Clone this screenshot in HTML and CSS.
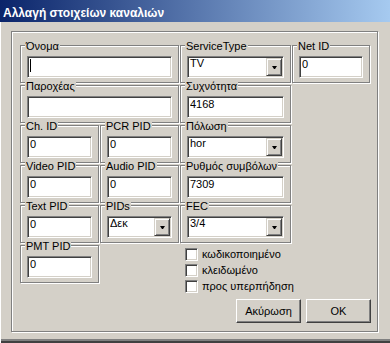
FILE: index.html
```html
<!DOCTYPE html>
<html lang="el">
<head>
<meta charset="utf-8">
<title>Αλλαγή στοιχείων καναλιών</title>
<link rel="stylesheet" href="styles.css">
</head>
<body>
<div class="window">
  <div class="titlebar"><span class="title">Αλλαγή στοιχείων καναλιών</span></div>
  <div class="panel">
    <div class="grid">
      <div class="group wide"><span class="lbl">Όνομα</span><span class="caretwrap"><input class="edit" type="text" value=""></span></div>
      <div class="group c3"><span class="lbl">ServiceType</span><div class="combo"><span class="val">TV</span><span class="dd"><svg width="5" height="3" viewBox="0 0 5 3"><polygon points="0,0 5,0 3,3 2,3" fill="#000"/></svg></span></div></div>
      <div class="group c4"><span class="lbl">Net ID</span><input class="edit" type="text" value="0"></div>

      <div class="group wide"><span class="lbl">Παροχέας</span><input class="edit" type="text" value=""></div>
      <div class="group c3"><span class="lbl">Συχνότητα</span><input class="edit" type="text" value="4168"></div>

      <div class="group c1"><span class="lbl">Ch. ID</span><input class="edit" type="text" value="0"></div>
      <div class="group c2"><span class="lbl">PCR PID</span><input class="edit" type="text" value="0"></div>
      <div class="group c3"><span class="lbl">Πόλωση</span><div class="combo"><span class="val">hor</span><span class="dd"><svg width="5" height="3" viewBox="0 0 5 3"><polygon points="0,0 5,0 3,3 2,3" fill="#000"/></svg></span></div></div>

      <div class="group c1"><span class="lbl">Video PID</span><input class="edit" type="text" value="0"></div>
      <div class="group c2"><span class="lbl">Audio PID</span><input class="edit" type="text" value="0"></div>
      <div class="group c3"><span class="lbl">Ρυθμός συμβόλων</span><input class="edit" type="text" value="7309"></div>

      <div class="group c1"><span class="lbl">Text PID</span><input class="edit" type="text" value="0"></div>
      <div class="group c2"><span class="lbl">PIDs</span><div class="combo"><span class="val">Δεκ</span><span class="dd"><svg width="5" height="3" viewBox="0 0 5 3"><polygon points="0,0 5,0 3,3 2,3" fill="#000"/></svg></span></div></div>
      <div class="group c3"><span class="lbl">FEC</span><div class="combo"><span class="val">3/4</span><span class="dd"><svg width="5" height="3" viewBox="0 0 5 3"><polygon points="0,0 5,0 3,3 2,3" fill="#000"/></svg></span></div></div>

      <div class="group c1"><span class="lbl">PMT PID</span><input class="edit" type="text" value="0"></div>
      <div class="checks">
        <label class="chk"><input type="checkbox"><span>κωδικοποιημένο</span></label>
        <label class="chk"><input type="checkbox"><span>κλειδωμένο</span></label>
        <label class="chk"><input type="checkbox"><span>προς υπερπήδηση</span></label>
      </div>

      <div class="buttons">
        <button class="btn" type="button">Ακύρωση</button>
        <button class="btn" type="button">OK</button>
      </div>
    </div>
  </div>
</div>
</body>
</html>
```

FILE: styles.css
```css
html, body {
  margin: 0;
  padding: 0;
  background: #d4d0c8;
}

body {
  font-family: "Liberation Sans", Arial, sans-serif;
  font-size: 11px;
  color: #000;
}

.window {
  width: 390px;
  height: 343px;
  box-sizing: border-box;
  background: #d4d0c8;
  overflow: hidden;
  box-shadow: inset 1px 0 0 #ffffff, inset 0 -2px 0 #404040, inset 0 -4px 0 #808080;
}

.titlebar {
  height: 22px;
  box-sizing: border-box;
  padding: 7px 0 0 3px;
  background: linear-gradient(to right, #0a246a, #a6caf0);
}

.title {
  display: block;
  color: #fff;
  font-weight: bold;
  font-size: 12px;
  line-height: 13px;
  white-space: nowrap;
}

.panel {
  margin: 9px 0 0 11px;
  width: 367px;
  box-sizing: border-box;
  border: 1px solid #808080;
  box-shadow: inset 1px 1px 0 #fff, 1px 1px 0 #fff;
  padding: 13px 0 8px 8px;
}

.grid {
  display: grid;
  grid-template-columns: 79px 79px 111px 78px;
  column-gap: 1px;
  row-gap: 2px;
  align-items: start;
}

.group {
  position: relative;
  height: 38px;
  box-sizing: border-box;
  border: 1px solid #808080;
  box-shadow: inset 1px 1px 0 #fff, 1px 1px 0 #fff;
  padding: 10px 6px 4px 6px;
}

.wide { grid-column: 1 / 3; }
.c1 { grid-column: 1; }
.c2 { grid-column: 2; }
.c3 { grid-column: 3; }
.c4 { grid-column: 4; }

.lbl {
  position: absolute;
  top: -6px;
  left: 4px;
  padding: 0 1px;
  background: #d4d0c8;
  line-height: 13px;
  white-space: nowrap;
}

.edit {
  display: block;
  width: 100%;
  height: 22px;
  box-sizing: border-box;
  margin: 0;
  padding: 0 1px 7px 2px;
  border: 1px solid;
  border-color: #808080 #fff #fff #808080;
  box-shadow: inset 1px 1px 0 #404040, inset -1px -1px 0 #d4d0c8;
  background: #fff;
  font: 11px "Liberation Sans", Arial, sans-serif;
  color: #000;
  outline: none;
  border-radius: 0;
}

.caretwrap {
  position: relative;
  display: block;
}

.caretwrap::after {
  content: "";
  position: absolute;
  left: 3px;
  top: 3px;
  width: 1px;
  height: 13px;
  background: #000;
}

.combo {
  display: flex;
  height: 22px;
  box-sizing: border-box;
  border: 1px solid;
  border-color: #808080 #fff #fff #808080;
  box-shadow: inset 1px 1px 0 #404040, inset -1px -1px 0 #d4d0c8;
  background: #fff;
}

.combo .val {
  flex: 1;
  padding-left: 2px;
  line-height: 13px;
  white-space: nowrap;
  overflow: hidden;
}

.dd {
  flex: none;
  width: 16px;
  height: 18px;
  margin: 1px;
  box-sizing: border-box;
  border: 1px solid;
  border-color: #d4d0c8 #404040 #404040 #d4d0c8;
  box-shadow: inset 1px 1px 0 #fff, inset -1px -1px 0 #808080;
  background: #d4d0c8;
  display: flex;
  align-items: center;
  justify-content: center;
}

.dd svg {
  display: block;
  margin-top: 1px;
}

.checks {
  grid-column: 3 / 5;
  padding: 1px 0 0 5px;
  display: flex;
  flex-direction: column;
}

.chk {
  display: flex;
  align-items: center;
  height: 16px;
  white-space: nowrap;
}

.chk input {
  appearance: none;
  -webkit-appearance: none;
  margin: 0 4px 0 0;
  width: 13px;
  height: 13px;
  box-sizing: border-box;
  border: 1px solid;
  border-color: #808080 #fff #fff #808080;
  box-shadow: inset 1px 1px 0 #404040, inset -1px -1px 0 #d4d0c8;
  background: #fff;
  border-radius: 0;
  flex: none;
}

.chk span {
  line-height: 13px;
}

.buttons {
  grid-column: 1 / 5;
  display: flex;
  justify-content: flex-end;
  gap: 5px;
  margin: 3px -1px 0 0;
}

.btn {
  width: 65px;
  height: 24px;
  box-sizing: border-box;
  margin: 0;
  padding: 0;
  border: 1px solid;
  border-color: #fff #404040 #404040 #fff;
  box-shadow: inset -1px -1px 0 #808080;
  background: #d4d0c8;
  font: 11px "Liberation Sans", Arial, sans-serif;
  color: #000;
  border-radius: 0;
}
```
